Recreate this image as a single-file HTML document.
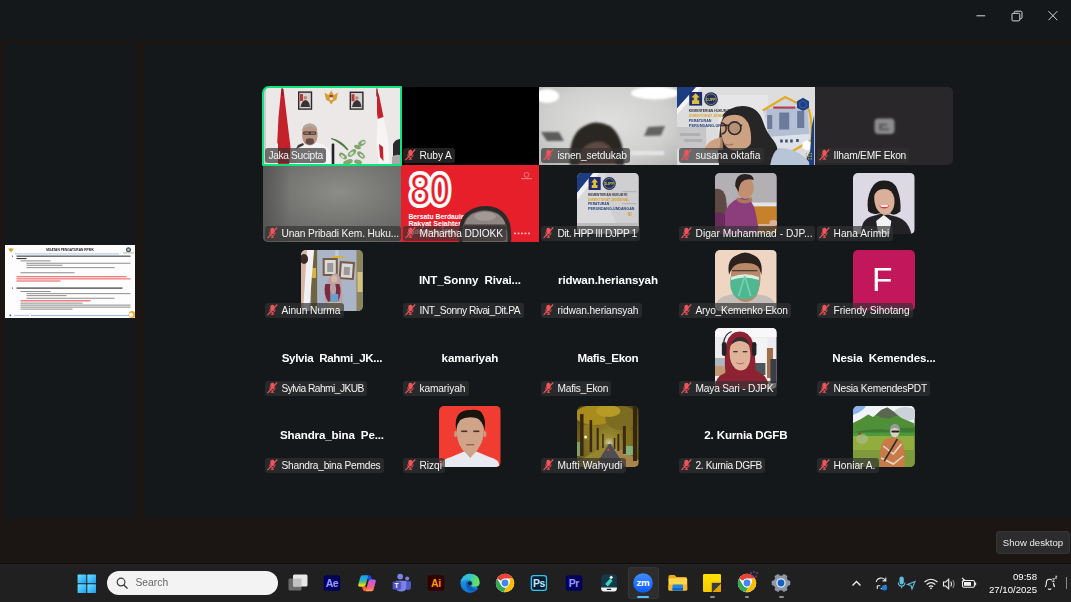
<!DOCTYPE html>
<html lang="id"><head><meta charset="utf-8"><title>Zoom Meeting</title>
<style>
html,body{margin:0;padding:0}
body{width:1071px;height:602px;overflow:hidden;background:#1b1614;position:relative;font-family:"Liberation Sans",sans-serif;color:#f2f2f2}
div,svg,span{position:absolute;box-sizing:border-box}
.lab,.big,.search,.tray,.tip,.av{will-change:transform}
.titlebar{left:0;top:0;width:1071px;height:40px;background:#14181b}
.side{left:5px;top:44px;width:130px;height:474px;background:#14181b}
.main{left:144px;top:44px;width:927px;height:474px;background:#14181b}
.tile{width:138px;overflow:hidden}
.tile svg{left:0;top:0}
.av{width:61.500px;height:61px;border-radius:5px;overflow:hidden}
.av svg{left:0;top:0;width:61.500px;height:61px}
.lab{height:15px;border-radius:3px;background:rgba(50,50,50,.68);white-space:pre;font-size:10.2px;line-height:15px;color:#f4f4f4;overflow:hidden}
.lab span{top:.4px;height:15px}
.mic{left:1.900px;top:1.300px}
.big{width:138px;text-align:center;font-weight:bold;font-size:11.6px;white-space:pre;color:#fff}
.big span{position:static;display:inline-block}
.taskbar{left:0;top:563px;width:1071px;height:39px;background:linear-gradient(#242424,#202020 4px);border-top:1px solid #0f0d0c}
.ti{position:absolute}
.search{left:107px;top:571px;width:171px;height:24px;border-radius:12px;background:#f3f3f3;color:#666;font-size:10.300px;line-height:24px}
.tray{font-size:9.600px;color:#fff;text-align:right;white-space:pre}
.tip{left:996px;top:531px;width:74px;height:23px;border-radius:3px;background:#2c2c2c;border:1px solid #353535;color:#ececec;font-size:9.600px;line-height:21px;text-align:center;white-space:pre}
</style></head><body>
<svg width="0" height="0" style="left:0;top:0"><defs>
<filter id="bl" x="-5%" y="-5%" width="110%" height="110%"><feGaussianBlur stdDeviation=".45"/></filter>
<filter id="bl2" x="-10%" y="-10%" width="120%" height="120%"><feGaussianBlur stdDeviation="1.300"/></filter>
<filter id="bl3" x="-50%" y="-50%" width="200%" height="200%"><feGaussianBlur stdDeviation="1.800"/></filter>
</defs></svg>
<div class="titlebar"></div>
<svg style="left:970px;top:6px" width="96" height="20" viewBox="0 0 96 20"><g fill="none" stroke="#d6d8da" stroke-width="1">
<path d="M6.500 9.800 h8.700"/>
<rect x="42" y="7.300" width="7.800" height="7.600" rx="1.100"/><path d="M44.200 7.300 v-.8 q0 -1.300 1.300 -1.300 h5.200 q1.300 0 1.300 1.300 v5 q0 1.300 -1.300 1.300 h-.9"/>
<path d="M78.500 5.200 l8.800 9 M87.300 5.200 l-8.800 9"/></g></svg>
<div class="side"></div>
<div class="main"></div>

<div style="left:5px;top:245px;width:130px;height:73px;background:#fdfdfd;overflow:hidden;font-family:'Liberation Sans',sans-serif">
<span style="left:0;top:2.800px;width:130px;text-align:center;font-size:3.250px;font-weight:bold;color:#1a1a1a;will-change:transform">MUATAN PENGATURAN RPMK</span>
<svg width="130" height="73" viewBox="0 0 130 73" style="left:0;top:0"><g filter="url(#bl)">
<path d="M3.500 3 l1.500 .8 l1 -1 l1 1 l1.500 -.8 l-.6 2.600 l-1 .5 l-.9 1.600 l-.9 -1.600 l-1 -.5z" fill="#d4a437"/>
<circle cx="123.500" cy="4.700" r="2.500" fill="#2a5a9a"/><circle cx="123.500" cy="4.700" r="1.300" fill="#e0c040"/><rect x="118" y="7.600" width="11" height=".7" fill="#999"/>
<rect x="10" y="8.700" width="104" height=".5" fill="#5b8fd0"/>
<g fill="#3a3a3a"><rect x="7" y="10.700" width="1" height="1"/><rect x="11.500" y="10.600" width="114" height="1.100"/><rect x="11.500" y="13" width="10" height="1.100"/>
<rect x="7" y="42.600" width="1" height="1"/><rect x="11.500" y="42.500" width="106" height="1.200"/></g>
<g fill="#737373"><rect x="15.500" y="15.500" width="30" height=".8"/><rect x="21.500" y="17.800" width="104" height=".8"/><rect x="21.500" y="19.800" width="36" height=".8"/><rect x="21.500" y="22.300" width="88" height=".8"/>
<rect x="15.500" y="27.400" width="54" height=".8"/>
<rect x="15.500" y="46" width="30" height=".8"/><rect x="21.500" y="48.300" width="104" height=".8"/><rect x="21.500" y="50.300" width="40" height=".8"/><rect x="21.500" y="52.800" width="88" height=".8"/>
<rect x="15.500" y="57.700" width="62" height=".8"/><rect x="15.500" y="59.700" width="110" height=".8"/><rect x="15.500" y="61.700" width="110" height=".8"/><rect x="15.500" y="63.700" width="52" height=".8"/></g>
<g fill="#ea2a2c"><rect x="11.500" y="31.400" width="110" height=".8"/><rect x="11.500" y="33.500" width="114" height=".8"/><rect x="11.500" y="35.600" width="44" height=".8"/><rect x="15.500" y="55.400" width="70" height=".9"/></g>
<rect x="4.500" y="69.600" width="1.600" height="1.600" fill="#2a5ab0"/><rect x="9" y="70" width="15" height=".5" fill="#5b8fd0"/><rect x="26" y="70" width="98" height=".6" fill="#5b8fd0"/>
<circle cx="127" cy="69.500" r="3.500" fill="#f0b040"/><circle cx="126" cy="69.700" r="2" fill="#fff"/>
</g></svg></div>

<div class="tile" style="left:263px;top:87px;height:78px;border-radius:6px 0 0 0;"><svg width="138" height="78" viewBox="0 0 138 78" preserveAspectRatio="none">
<rect width="138" height="78" fill="#ebe8e7"/>
<rect width="3" height="78" fill="#cfcccb"/>
<g filter="url(#bl)" transform="translate(-1,0)">
<polygon points="19.300,2 21.500,2 26,40 28.500,60 27,78 15.500,78 15,60 16.500,30" fill="#c3202b"/>
<polygon points="13.500,58 16,56 16,78 13,78" fill="#f2f0f0"/>
<rect x="19.600" y="1" width="1" height="8" fill="#7a1a20"/>
<rect x="36" y="4.400" width="14.200" height="18.400" fill="#2a2a2c"/><rect x="37.400" y="5.800" width="11.400" height="15.600" fill="#d6d2cf"/><path d="M38.500 20 q1 -6 5 -7 q4 1 4.500 7z" fill="#3a3236"/><rect x="38" y="7" width="3" height="7" fill="#b8383c"/><circle cx="43.300" cy="10.800" r="1.800" fill="#b48c74"/>
<rect x="87.600" y="4.600" width="14" height="18.200" fill="#2a2a2c"/><rect x="89" y="6" width="11.200" height="15.400" fill="#d6d2cf"/><path d="M90 20 q1 -6 5 -7 q4 1 4.500 7z" fill="#3a3236"/><rect x="89.500" y="7.200" width="3" height="7" fill="#b8383c"/><circle cx="94.800" cy="11" r="1.800" fill="#b48c74"/>
<path d="M62.500 5.500 l4 2.500 l2.700 -4.500 l2.700 4.500 l4 -2.500 l-1.500 7.500 l-3 1.200 l-2.200 3.200 l-2.200 -3.200 l-3 -1.200z" fill="#d2a238"/>
<rect x="67.600" y="8" width="3.200" height="5" fill="#b8302c"/><rect x="67.600" y="10.300" width="3.200" height="2.700" fill="#f0ece8"/>
<rect x="114.300" y="1.500" width="1.200" height="8" fill="#5a2a2e"/>
<polygon points="115,2.500 117,8 121.500,30 116,33.500 115,26" fill="#c3202b"/>
<polygon points="115.500,32 121.500,30 126,52 127.500,77 117,77 114.500,56" fill="#f6f4f4"/>
<polygon points="117,57 121,60 121.500,74 118,70" fill="#c3202b"/>
<path d="M131 69 v-12 q2 -4.500 7 -5 v17z" fill="#2c2c2e"/><path d="M130 78 v-8 q3 -3 8 -2 v10z" fill="#a8a8aa"/>
<path d="M34 62 l2 -4 l5 -2 l1 2z" fill="#38383a"/>
<path d="M34 78 q1 -18 11 -21 l4 -1.500 h5 q10 2 14 8 q2 6 2 14.500z" fill="#f4f4f6"/>
<rect x="69.700" y="56.400" width="2.600" height="21.600" rx="1" fill="#242426"/>
<path d="M40 47 q-.5 -10.500 7.800 -10.500 q7.800 0 7.800 10.500 q0 7 -3 9.500 q-2.500 2 -4.800 2 q-2.600 0 -5 -2 q-2.800 -3 -2.800 -9.500z" fill="#bb957e"/>
<path d="M40.200 43 q1 -6.500 7.600 -6.500 q6.600 0 7.600 6.500 q-3 -3.500 -7.600 -3.500 q-4.600 0 -7.600 3.500z" fill="#b3a8a2"/>
<rect x="41.200" y="44.500" width="13" height="3.200" rx="1.200" fill="#3a3434"/><rect x="42.300" y="45.300" width="4.600" height="1.700" fill="#8a7468"/><rect x="48.600" y="45.300" width="4.600" height="1.700" fill="#8a7468"/>
<path d="M44 52 q4 -1.500 7.500 0 l.5 4 q-4 3.500 -8.500 0z" fill="#5e4c46"/>
<path d="M69.500 51 q10 2 17 11.500 l-1.200 1 q-8 -8.500 -16.500 -11.500z" fill="#4f7a40"/>
<g fill="#6f9a5e" opacity=".85"><ellipse cx="100" cy="56" rx="4" ry="2.500" transform="rotate(-30 100 56)"/><ellipse cx="95.500" cy="60" rx="3.500" ry="2" transform="rotate(20 95.500 60)"/><ellipse cx="90" cy="66" rx="5" ry="2.600" transform="rotate(-40 90 66)"/><ellipse cx="81" cy="69" rx="4.500" ry="2.400" transform="rotate(35 81 69)"/><ellipse cx="99" cy="68" rx="4.500" ry="2.500" transform="rotate(40 99 68)"/><ellipse cx="86" cy="75" rx="5" ry="2.500" transform="rotate(-20 86 75)"/><ellipse cx="96" cy="75" rx="4" ry="2.200" transform="rotate(15 96 75)"/></g>
<g fill="#dfe9da" opacity=".9"><ellipse cx="101" cy="55.500" rx="2" ry="1.200" transform="rotate(-30 101 55.500)"/><ellipse cx="89.500" cy="66.500" rx="2.500" ry="1.200" transform="rotate(-40 89.500 66.500)"/><ellipse cx="80.500" cy="69.500" rx="2.200" ry="1.100" transform="rotate(35 80.500 69.500)"/><ellipse cx="99.500" cy="68.500" rx="2.200" ry="1.100" transform="rotate(40 99.500 68.500)"/></g>
</g></svg></div>
<div class="lab" style="left:265px;top:148px;width:61.2px"><span style="left:3.4px;letter-spacing:-0.329px">Jaka Sucipta</span></div>
<div class="tile" style="left:401px;top:87px;height:78px;background:#000;"></div>
<div class="lab" style="left:403px;top:148px;width:52.1px"><svg class="mic" width="11" height="12" viewBox="0 0 11 12"><rect x="3.300" y=".8" width="4.200" height="6.400" rx="2.100" fill="#f0545a"/><path d="M2.600 5.600 q0 2.900 2.800 2.900 q2.800 0 2.800 -2.900" fill="none" stroke="#f0545a" stroke-width=".9"/><path d="M5.400 8.500 v1.500 M3.700 10.300 h3.400" stroke="#f0545a" stroke-width="1.100"/><path d="M.5 11.200 L10.200 .5" stroke="#f0545a" stroke-width="1.150"/></svg><span style="left:16.5px;letter-spacing:-0.093px">Ruby A</span></div>
<div class="tile" style="left:539px;top:87px;height:78px;"><svg width="138" height="78" viewBox="0 0 138 78" preserveAspectRatio="none">
<defs><radialGradient id="g3" cx="50%" cy="45%" r="75%"><stop offset="0" stop-color="#e0e0de"/><stop offset=".6" stop-color="#d0d0ce"/><stop offset="1" stop-color="#b4b4b2"/></radialGradient></defs>
<rect width="138" height="78" fill="url(#g3)"/>
<g filter="url(#bl2)">
<ellipse cx="8" cy="9" rx="12" ry="7" fill="#fff"/>
<ellipse cx="116" cy="6" rx="24" ry="6.500" fill="#fff"/>
<polygon points="2,45 20,45 25,54 8,54" fill="#5c5c5c"/>
<polygon points="109,40 126,39 122,48.500 105,49" fill="#646464"/>
<rect x="92" y="64" width="33" height="4" fill="#e6e6ea"/>
<path d="M31 78 q-2 -27 11 -37 q14 -10 29 -2 q14 10 14 39z" fill="#2b2624"/>
<path d="M40 78 q-1 -20 17 -23 q17 -2 20 23z" fill="#5e4a42"/>
</g></svg></div>
<div class="lab" style="left:541px;top:148px;width:89.0px"><svg class="mic" width="11" height="12" viewBox="0 0 11 12"><rect x="3.300" y=".8" width="4.200" height="6.400" rx="2.100" fill="#f0545a"/><path d="M2.600 5.600 q0 2.900 2.800 2.900 q2.800 0 2.800 -2.900" fill="none" stroke="#f0545a" stroke-width=".9"/><path d="M5.400 8.500 v1.500 M3.700 10.300 h3.400" stroke="#f0545a" stroke-width="1.100"/><path d="M.5 11.200 L10.200 .5" stroke="#f0545a" stroke-width="1.150"/></svg><span style="left:16.5px;letter-spacing:-0.155px">isnen_setdukab</span></div>
<div class="tile" style="left:677px;top:87px;height:78px;"><svg width="138" height="78" viewBox="0 0 138 78" preserveAspectRatio="none">
<rect width="138" height="78" fill="#dddddd"/>
<g filter="url(#bl)" transform="translate(-.8,0)">
<rect x="42" y="8" width="50" height="40" fill="#e6e6e8"/>
<path d="M0 40 h30 v22 h-30z" fill="#c6c6c8"/><path d="M4 46 h20 v3 h-20z M8 52 h18 v3 h-18z" fill="#b0b0b2"/>
<polygon points="0,0 20,0 0,22.600" fill="#1c3c80"/>
<polygon points="20,0 25.500,0 0,28.500 0,22.600" fill="#f4f4f4"/>
<rect x="13" y="5" width="12.900" height="13.600" fill="#232a6e"/>
<path d="M19.400 6.300 l4.200 4.200 h-2.400 v2.800 h1.800 v3.600 h-7.200 v-3.600 h1.800 v-2.800 h-2.400z" fill="#d9c23a"/>
<circle cx="34.800" cy="12.200" r="6.900" fill="#1d2f66"/><circle cx="34.800" cy="12.200" r="5.300" fill="none" stroke="#c8b04a" stroke-width=".6"/><text x="34.800" y="13.500" font-family="Liberation Sans, sans-serif" font-weight="bold" font-size="3.600" fill="#d9c23a" text-anchor="middle">DJPP</text>
<g font-family="Liberation Sans, sans-serif" font-weight="bold">
<text x="12.600" y="25.200" font-size="3.300" fill="#33333c" textLength="42" lengthAdjust="spacingAndGlyphs">KEMENTERIAN HUKUM RI</text>
<text x="12.600" y="30.300" font-size="3.900" fill="#d9a62a" textLength="44" lengthAdjust="spacingAndGlyphs">DIREKTORAT JENDERAL</text>
<text x="12.600" y="34.800" font-size="3.900" fill="#27407e" textLength="22.600" lengthAdjust="spacingAndGlyphs">PERATURAN</text>
<text x="12.600" y="39.800" font-size="3.900" fill="#27407e" textLength="49.500" lengthAdjust="spacingAndGlyphs">PERUNDANG-UNDANGAN</text>
</g>
<polygon points="86.500,23.500 109,10 132.500,22 135.500,53 116,64 96,60" fill="#d0d6e2"/>
<polygon points="90,22 131,19 133,47 92,50" fill="#b4bfd4"/>
<polygon points="92,50 133,47 134,56 118,63 96,60" fill="#dde2ea"/>
<rect x="97" y="19.500" width="22" height="2.200" fill="#b84048"/>
<g fill="#6c7a9c"><rect x="91" y="28" width="5" height="14"/><rect x="103" y="25.500" width="10" height="17"/><rect x="121" y="24" width="7" height="17"/></g>
<g fill="#3e4a68"><rect x="104" y="52.500" width="2.500" height="3"/><rect x="109" y="52.500" width="2.500" height="3"/><rect x="114" y="52.500" width="2.500" height="3"/><rect x="120" y="52" width="2.500" height="3"/></g>
<path d="M86.500 23.500 L109 10 L132.500 22" fill="none" stroke="#e3ac22" stroke-width="2.200"/>
<path d="M132.500 22 q3.500 10 3 31 l-19 11" fill="none" stroke="#e3ac22" stroke-width="2.200"/>
<polygon points="120.800,14.300 126.800,10.800 132.800,14.300 132.800,20.800 126.800,24 120.800,20.800" fill="#1f3f86"/>
<polygon points="123.500,15.800 126.800,13.900 130.100,15.800 130.100,19.400 126.800,21.200 123.500,19.400" fill="none" stroke="#4a6ab0" stroke-width=".7"/>
<polygon points="126.200,55.800 130.800,53.200 135.400,55.800 135.400,61 130.800,63.600 126.200,61" fill="#fff"/>
<polygon points="138,28 138,78 127,78 134,64 135.500,40" fill="#1c3c80"/>
<g fill="#c8a838"><rect x="129.500" y="66" width="1.300" height="1.300"/><rect x="132" y="66" width="1.300" height="1.300"/><rect x="134.500" y="66" width="1.300" height="1.300"/><rect x="129.500" y="68.600" width="1.300" height="1.300"/><rect x="132" y="68.600" width="1.300" height="1.300"/><rect x="134.500" y="68.600" width="1.300" height="1.300"/><rect x="129.500" y="71.200" width="1.300" height="1.300"/><rect x="132" y="71.200" width="1.300" height="1.300"/><rect x="134.500" y="71.200" width="1.300" height="1.300"/></g>
<path d="M43 78 q-3 -10 0 -22 q0 -18 4 -26 q6 -11 19 -11 q16 0 21 16 q3 10 10 18 q6 8 4 16 q-2 6 -5 9z" fill="#252527"/>
<path d="M45 46 q-2 -15 8 -17.500 q13 -3 19 7.500 q4 10 2.500 21 q-4 6 -14.500 6.500 q-13 0 -15 -17.500z" fill="#cda283"/>
<path d="M46 30 q10 -7 24 -1 q-4 -8 -13 -7 q-8 0 -11 8z" fill="#252527"/>
<path d="M28 63 q3 -10 16 -12.500 q3 5 2.500 12.500z" fill="#cda283"/>
<path d="M44 50 q1 6 -1 12 h3 q1 -6 0 -12z" fill="#a87e66"/>
<rect x="44" y="37.500" width="22" height="1.800" fill="#3a3030"/>
<circle cx="58.400" cy="41.200" r="6.300" fill="#b89078" stroke="#332a2a" stroke-width="1.600"/>
<path d="M44.500 36 q5 0 5.500 5 q0 5 -4.500 6" fill="none" stroke="#332a2a" stroke-width="1.500"/>
<path d="M48 57 q5 2 9 0" stroke="#a86a5c" stroke-width="1.200" fill="none"/>
<path d="M94 78 q2 -13 9 -17 q18 0 30 14 v3z" fill="#b8c4d8"/>
</g></svg></div>
<div class="lab" style="left:679px;top:148px;width:84.6px"><svg class="mic" width="11" height="12" viewBox="0 0 11 12"><rect x="3.300" y=".8" width="4.200" height="6.400" rx="2.100" fill="#f0545a"/><path d="M2.600 5.600 q0 2.900 2.800 2.900 q2.800 0 2.800 -2.900" fill="none" stroke="#f0545a" stroke-width=".9"/><path d="M5.400 8.500 v1.500 M3.700 10.300 h3.400" stroke="#f0545a" stroke-width="1.100"/><path d="M.5 11.200 L10.200 .5" stroke="#f0545a" stroke-width="1.150"/></svg><span style="left:16.5px;letter-spacing:-0.065px">susana oktafia</span></div>
<div class="tile" style="left:815px;top:87px;height:78px;background:#29272a;border-radius:0 5px 5px 0;"><svg width="138" height="78"><g filter="url(#bl2)"><rect x="59.500" y="31.500" width="20" height="15.500" rx="4" fill="#8c8c8e"/><path d="M64 36.500 h8 v2.500 h-5 v2 h7 v2.500 h-10z" fill="#5c5c5e"/></g></svg></div>
<div class="lab" style="left:817px;top:148px;width:92.4px"><svg class="mic" width="11" height="12" viewBox="0 0 11 12"><rect x="3.300" y=".8" width="4.200" height="6.400" rx="2.100" fill="#f0545a"/><path d="M2.600 5.600 q0 2.900 2.800 2.900 q2.800 0 2.800 -2.900" fill="none" stroke="#f0545a" stroke-width=".9"/><path d="M5.400 8.500 v1.500 M3.700 10.300 h3.400" stroke="#f0545a" stroke-width="1.100"/><path d="M.5 11.200 L10.200 .5" stroke="#f0545a" stroke-width="1.150"/></svg><span style="left:16.5px;letter-spacing:-0.194px">Ilham/EMF Ekon</span></div>
<div class="tile" style="left:263px;top:165px;height:77px;border-radius:0 0 0 5px;"><svg width="138" height="77" viewBox="0 0 138 78" preserveAspectRatio="none">
<defs><radialGradient id="g6" cx="55%" cy="35%" r="75%"><stop offset="0" stop-color="#8c8c88"/><stop offset=".6" stop-color="#727270"/><stop offset="1" stop-color="#626260"/></radialGradient>
<linearGradient id="g6b" x1="0" x2="1"><stop offset="0" stop-color="#4e4e4c" stop-opacity=".7"/><stop offset=".2" stop-color="#4e4e4c" stop-opacity="0"/></linearGradient></defs>
<rect width="138" height="78" fill="url(#g6)"/><rect width="138" height="78" fill="url(#g6b)"/></svg></div>
<div class="lab" style="left:265px;top:225.5px;width:135.5px"><svg class="mic" width="11" height="12" viewBox="0 0 11 12"><rect x="3.300" y=".8" width="4.200" height="6.400" rx="2.100" fill="#f0545a"/><path d="M2.600 5.600 q0 2.900 2.800 2.900 q2.800 0 2.800 -2.900" fill="none" stroke="#f0545a" stroke-width=".9"/><path d="M5.400 8.500 v1.500 M3.700 10.300 h3.400" stroke="#f0545a" stroke-width="1.100"/><path d="M.5 11.200 L10.200 .5" stroke="#f0545a" stroke-width="1.150"/></svg><span style="left:16.5px;letter-spacing:-0.128px">Unan Pribadi Kem. Huku...</span></div>
<div class="tile" style="left:401px;top:165px;height:77px;"><svg width="138" height="77" viewBox="0 0 138 78" preserveAspectRatio="none">
<rect width="138" height="78" fill="#e71f2b"/>
<g font-family="Liberation Sans, sans-serif" font-weight="bold" fill="#fff">
<text font-family="DejaVu Sans, sans-serif" font-weight="normal" font-size="39" fill="none" stroke="#fff" stroke-width="7.200" stroke-linejoin="round" transform="translate(8.300,40) scale(.87,1)"><tspan x="0">8</tspan><tspan x="22.600">0</tspan></text>
<text font-family="DejaVu Sans, sans-serif" font-weight="normal" font-size="39" fill="#e71f2b" stroke="#fff" stroke-width=".4" transform="translate(8.300,40) scale(.87,1)"><tspan x="0">8</tspan><tspan x="22.600">0</tspan></text>
<text x="7.400" y="54.300" font-size="7.500" textLength="58.500" lengthAdjust="spacingAndGlyphs">Bersatu Berdaulat</text>
<text x="7.400" y="61.300" font-size="7.500" textLength="56.500" lengthAdjust="spacingAndGlyphs">Rakyat Sejahtera</text>
<text x="7.400" y="70.300" font-size="7.500" textLength="49" lengthAdjust="spacingAndGlyphs">Indonesia Maju</text>
</g>
<g filter="url(#bl)">
<circle cx="125.500" cy="10" r="2.400" fill="none" stroke="#f6a0a6" stroke-width=".6"/><rect x="120" y="13.500" width="11" height=".8" fill="#f6a0a6"/>
<g fill="#f4b6ba"><rect x="113" y="68.500" width="2" height="1.600"/><rect x="116.500" y="68.500" width="2" height="1.600"/><rect x="120" y="68.500" width="2" height="1.600"/><rect x="123.500" y="68.500" width="2" height="1.600"/><rect x="127" y="68.500" width="2" height="1.600"/></g>
<path d="M58 78 q-2 -24 9 -31 q9 -6 19 -5.500 q18 1 23 18 q2 10 1 18.500z" fill="#2e2a2a"/>
<path d="M61.500 78 q-2 -21 8 -28 q14 -8 27 -1 q11 7 10 29z" fill="#6a605e"/>
<path d="M64 60 q2 -12 20 -13.500 q17 1 20.500 13.500z" fill="#8f8683"/>
<ellipse cx="84" cy="52" rx="11" ry="4.500" fill="#a39a97"/>
<rect x="63" y="60.500" width="43" height="5" fill="#463f3e"/>
</g></svg></div>
<div class="lab" style="left:403px;top:225.5px;width:103.2px"><svg class="mic" width="11" height="12" viewBox="0 0 11 12"><rect x="3.300" y=".8" width="4.200" height="6.400" rx="2.100" fill="#f0545a"/><path d="M2.600 5.600 q0 2.900 2.800 2.900 q2.800 0 2.800 -2.900" fill="none" stroke="#f0545a" stroke-width=".9"/><path d="M5.400 8.500 v1.500 M3.700 10.300 h3.400" stroke="#f0545a" stroke-width="1.100"/><path d="M.5 11.200 L10.200 .5" stroke="#f0545a" stroke-width="1.150"/></svg><span style="left:16.5px;letter-spacing:-0.102px">Mahartha DDIOKK</span></div>
<div class="av" style="left:577px;top:173px"><svg viewBox="0 0 61 61" preserveAspectRatio="none">
<rect width="61" height="61" fill="#d9d9db"/>
<g filter="url(#bl)">
<polygon points="28,0 61,0 61,61 44,61 30,30" fill="#cfcfd2"/>
<polygon points="0,0 16,0 0,20" fill="#1c3c80"/>
<polygon points="16,0 22,0 0,27 0,20" fill="#f0f0f2"/>
<rect x="11.500" y="4" width="12" height="13" fill="#232a6e"/>
<path d="M17.500 5.500 l3.400 4 h-2 v2.500 h1.500 v3 h-5.800 v-3 h1.500 v-2.500 h-2z" fill="#d9c23a"/>
<circle cx="32" cy="10.500" r="6.500" fill="#1d2f66"/><circle cx="32" cy="10.500" r="5" fill="none" stroke="#c8b04a" stroke-width=".6"/><text x="32" y="11.700" font-family="Liberation Sans, sans-serif" font-weight="bold" font-size="3.400" fill="#d9c23a" text-anchor="middle">DJPP</text>
<rect x="0" y="50" width="61" height="11" fill="#bdbdc0"/>
<rect x="45" y="18" width="14" height="1.200" fill="#b4b4b8"/><rect x="45" y="30" width="14" height="1.200" fill="#b4b4b8"/>
</g>
<g font-family="Liberation Sans, sans-serif" font-weight="bold">
<text x="11" y="23.300" font-size="2.900" fill="#33333c" textLength="39" lengthAdjust="spacingAndGlyphs">KEMENTERIAN HUKUM RI</text>
<text x="11" y="28" font-size="3.300" fill="#d6a32c" textLength="41" lengthAdjust="spacingAndGlyphs">DIREKTORAT JENDERAL</text>
<text x="11" y="32.500" font-size="3.300" fill="#27407e" textLength="21" lengthAdjust="spacingAndGlyphs">PERATURAN</text>
<text x="11" y="37" font-size="3.300" fill="#27407e" textLength="46" lengthAdjust="spacingAndGlyphs">PERUNDANG-UNDANGAN</text>
<text x="50" y="43.500" font-size="5" fill="#d6a32c">III</text>
</g></svg></div>
<div class="lab" style="left:541px;top:225.5px;width:99.0px"><svg class="mic" width="11" height="12" viewBox="0 0 11 12"><rect x="3.300" y=".8" width="4.200" height="6.400" rx="2.100" fill="#f0545a"/><path d="M2.600 5.600 q0 2.900 2.800 2.900 q2.800 0 2.800 -2.900" fill="none" stroke="#f0545a" stroke-width=".9"/><path d="M5.400 8.500 v1.500 M3.700 10.300 h3.400" stroke="#f0545a" stroke-width="1.100"/><path d="M.5 11.200 L10.200 .5" stroke="#f0545a" stroke-width="1.150"/></svg><span style="left:16.5px;letter-spacing:-0.431px">Dit. HPP III DJPP 1</span></div>
<div class="av" style="left:715px;top:173px"><svg viewBox="0 0 61 61" preserveAspectRatio="none">
<rect width="61" height="61" fill="#aba9ab"/>
<g filter="url(#bl)">
<rect x="0" y="0" width="61" height="30" fill="#b2b0b2"/>
<rect x="36" y="29.500" width="25" height="4" fill="#e4e4e6"/>
<rect x="38" y="33.500" width="23" height="27.500" fill="#c7812a"/>
<path d="M0 16 q9 -2 11 10 q2 14 0 35 h-11z" fill="#5e4844"/>
<path d="M9 61 q-2 -22 6 -30 q8 -8 18 -6 q6 6 8 18 q2 10 2 18z" fill="#8c3c7c"/>
<path d="M0 40 q6 -2 10 2 v19 h-10z" fill="#6a2a5c"/>
<ellipse cx="30" cy="15" rx="8.500" ry="11" fill="#c09070"/>
<path d="M20 13 q0 -12 10 -12 q8 0 8.500 6 q-8 -2 -12 2 q-3 4 -3 10z" fill="#2a2422"/>
<path d="M22 24 q8 6 14 0 l1 4 q-8 5 -15 0z" fill="#a87a5c"/>
<ellipse cx="58" cy="50" rx="4" ry="3" fill="#d8b49c"/>
<rect x="43" y="51" width="14" height="2.500" fill="#d8b49c"/>
</g></svg></div>
<div class="lab" style="left:679px;top:225.5px;width:135.5px"><svg class="mic" width="11" height="12" viewBox="0 0 11 12"><rect x="3.300" y=".8" width="4.200" height="6.400" rx="2.100" fill="#f0545a"/><path d="M2.600 5.600 q0 2.900 2.800 2.900 q2.800 0 2.800 -2.900" fill="none" stroke="#f0545a" stroke-width=".9"/><path d="M5.400 8.500 v1.500 M3.700 10.300 h3.400" stroke="#f0545a" stroke-width="1.100"/><path d="M.5 11.200 L10.200 .5" stroke="#f0545a" stroke-width="1.150"/></svg><span style="left:16.5px;letter-spacing:0.024px">Digar Muhammad - DJP...</span></div>
<div class="av" style="left:853px;top:173px"><svg viewBox="0 0 61 61" preserveAspectRatio="none">
<rect width="61" height="61" fill="#dcd9e5"/>
<g filter="url(#bl)">
<path d="M8 61 q0 -16 12 -18 l10 -3 l10 3 q14 2 18 18z" fill="#222328"/>
<path d="M23 48 l7.500 -6 l7.500 6 l-2 13 h-11z" fill="#f2f2f2"/>
<path d="M15 38 q-2 -12 3 -22 q4 -9 13 -8.500 q10 0 13 9 q4 10 3 22 q-6 5 -10 2 l-12 0 q-6 2 -10 -2.500z" fill="#1f1c1e"/>
<path d="M21 24 q1 -8 10 -8 q8 0 10 9 q1 10 -4 15 q-5 4 -10 0 q-6 -5 -6 -16z" fill="#dbb09a"/>
<path d="M26 32 q5 4 10 0 q-1 3.500 -5 3.500 q-4 0 -5 -3.500z" fill="#d03a4a"/>
<rect x="27.500" y="32.300" width="7" height="1.500" fill="#fff"/>
</g></svg></div>
<div class="lab" style="left:817px;top:225.5px;width:75.6px"><svg class="mic" width="11" height="12" viewBox="0 0 11 12"><rect x="3.300" y=".8" width="4.200" height="6.400" rx="2.100" fill="#f0545a"/><path d="M2.600 5.600 q0 2.900 2.800 2.900 q2.800 0 2.800 -2.900" fill="none" stroke="#f0545a" stroke-width=".9"/><path d="M5.400 8.500 v1.500 M3.700 10.300 h3.400" stroke="#f0545a" stroke-width="1.100"/><path d="M.5 11.200 L10.200 .5" stroke="#f0545a" stroke-width="1.150"/></svg><span style="left:16.5px;letter-spacing:0.027px">Hana Arimbi</span></div>
<div class="av" style="left:301px;top:250.3px"><svg viewBox="0 0 61 61" preserveAspectRatio="none">
<rect width="61" height="61" fill="#a7b2c4"/>
<g filter="url(#bl)">
<rect x="13" y="0" width="48" height="61" fill="#aab6c8"/>
<rect x="34" y="0" width="3" height="61" fill="#c2cad6"/>
<rect x="10" y="0" width="6" height="61" fill="#6f6440"/>
<rect x="11" y="18" width="4" height="10" fill="#d9b43a"/>
<rect x="55" y="0" width="6" height="61" fill="#8b845c"/>
<rect x="56" y="22" width="5" height="20" fill="#d6c27a"/>
<rect x="0" y="0" width="8" height="61" fill="#d8b8a4"/>
<polygon points="6,0 13,0 8,61 2,61" fill="#f2f2f4"/>
<ellipse cx="3" cy="9" rx="4" ry="5" fill="#3a2c28"/>
<path d="M32 6 h10 l2 2 h-14z" fill="#d9b43a"/>
<rect x="21.500" y="8" width="15" height="18" fill="#7a5a44"/><rect x="23.500" y="10" width="11" height="14" fill="#dcdad6"/><rect x="26" y="13" width="6" height="9" fill="#9a9a9a"/>
<rect x="38" y="11.500" width="15" height="18" fill="#7a5a44" transform="rotate(4 45 20)"/><rect x="40" y="13.500" width="11" height="14" fill="#dcdad6" transform="rotate(4 45 20)"/><rect x="42.500" y="17" width="6" height="8" fill="#9a9a9a" transform="rotate(4 45 20)"/>
<path d="M27 61 q-6 -14 -2 -26 q3 -10 9 -12 q6 2 6 12 q3 10 -1 26z" fill="#b9a1a6"/>
<path d="M24 34 q-2 10 3 18 l4 -2 q-3 -8 -2 -16z M38 34 q3 8 -1 17 l-4 -2 q3 -8 1 -15z" fill="#7c2a3c"/>
<ellipse cx="33" cy="29" rx="3" ry="3.500" fill="#dab8a4"/>
<path d="M29 44 h8 v9 h-8z" fill="#6aa0cc"/>
<rect x="26" y="52" width="14" height="9" fill="#c9b89a"/>
</g></svg></div>
<div class="lab" style="left:265px;top:303px;width:78.7px"><svg class="mic" width="11" height="12" viewBox="0 0 11 12"><rect x="3.300" y=".8" width="4.200" height="6.400" rx="2.100" fill="#f0545a"/><path d="M2.600 5.600 q0 2.900 2.800 2.900 q2.800 0 2.800 -2.900" fill="none" stroke="#f0545a" stroke-width=".9"/><path d="M5.400 8.500 v1.500 M3.700 10.300 h3.400" stroke="#f0545a" stroke-width="1.100"/><path d="M.5 11.200 L10.200 .5" stroke="#f0545a" stroke-width="1.150"/></svg><span style="left:16.5px;letter-spacing:-0.052px">Ainun Nurma</span></div>
<div class="big" style="left:401px;top:242px;height:77px;line-height:76px"><span style="letter-spacing:-0.120px;word-spacing:3.0px;margin-right:0.120px">INT_Sonny Rivai...</span></div>
<div class="lab" style="left:403px;top:303px;width:120.5px"><svg class="mic" width="11" height="12" viewBox="0 0 11 12"><rect x="3.300" y=".8" width="4.200" height="6.400" rx="2.100" fill="#f0545a"/><path d="M2.600 5.600 q0 2.900 2.800 2.900 q2.800 0 2.800 -2.900" fill="none" stroke="#f0545a" stroke-width=".9"/><path d="M5.400 8.500 v1.500 M3.700 10.300 h3.400" stroke="#f0545a" stroke-width="1.100"/><path d="M.5 11.200 L10.200 .5" stroke="#f0545a" stroke-width="1.150"/></svg><span style="left:16.5px;letter-spacing:-0.433px">INT_Sonny Rivai_Dit.PA</span></div>
<div class="big" style="left:539px;top:242px;height:77px;line-height:76px"><span style="letter-spacing:-0.112px;word-spacing:0px;margin-right:0.112px">ridwan.heriansyah</span></div>
<div class="lab" style="left:541px;top:303px;width:100.6px"><svg class="mic" width="11" height="12" viewBox="0 0 11 12"><rect x="3.300" y=".8" width="4.200" height="6.400" rx="2.100" fill="#f0545a"/><path d="M2.600 5.600 q0 2.900 2.800 2.900 q2.800 0 2.800 -2.900" fill="none" stroke="#f0545a" stroke-width=".9"/><path d="M5.400 8.500 v1.500 M3.700 10.300 h3.400" stroke="#f0545a" stroke-width="1.100"/><path d="M.5 11.200 L10.200 .5" stroke="#f0545a" stroke-width="1.150"/></svg><span style="left:16.5px;letter-spacing:-0.111px">ridwan.heriansyah</span></div>
<div class="av" style="left:715px;top:250.3px"><svg viewBox="0 0 61 61" preserveAspectRatio="none">
<rect width="61" height="61" fill="#efd6c3"/>
<g filter="url(#bl)">
<path d="M0 61 q0 -14 14 -16 l16 -4 l16 4 q15 2 15 16z" fill="#c4bdb8"/>
<path d="M14 25 q-3 -16 8 -20 q8 -5 16 0 q10 4 8 20 q-2 -10 -16 -10 q-14 0 -16 10z" fill="#2a211e"/>
<path d="M16 22 q1 -9 14.500 -9 q13.500 0 14.500 9 q1 14 -4 24 q-5 6 -10.500 6 q-6 0 -11 -6 q-5 -10 -3.500 -24z" fill="#b98868"/>
<rect x="17" y="20" width="25" height="1.300" fill="#4a3a34"/>
<path d="M15.500 27 q14 -5 28 0 q2 14 -5 20 q-9 5 -18 0 q-7 -6 -5 -20z" fill="#4fb892"/>
<path d="M16 27 q14 -5.500 27.500 0 l0 3 q-14 -5 -27.500 0z" fill="#d8efe6"/>
<path d="M29.500 26 l-6 20 M29.500 26 l6 20" stroke="#7fd0b2" stroke-width="1.500" fill="none"/>
</g></svg></div>
<div class="lab" style="left:679px;top:303px;width:111.9px"><svg class="mic" width="11" height="12" viewBox="0 0 11 12"><rect x="3.300" y=".8" width="4.200" height="6.400" rx="2.100" fill="#f0545a"/><path d="M2.600 5.600 q0 2.900 2.800 2.900 q2.800 0 2.800 -2.900" fill="none" stroke="#f0545a" stroke-width=".9"/><path d="M5.400 8.500 v1.500 M3.700 10.300 h3.400" stroke="#f0545a" stroke-width="1.100"/><path d="M.5 11.200 L10.200 .5" stroke="#f0545a" stroke-width="1.150"/></svg><span style="left:16.5px;letter-spacing:-0.212px">Aryo_Kemenko Ekon</span></div>
<div class="av" style="left:853px;top:250.3px;background:#c2185b"><span style="left:0;top:0;width:61.500px;height:61px;line-height:60.500px;text-align:center;font-size:33.500px;color:#fff;text-indent:-3px">F</span></div>
<div class="lab" style="left:817px;top:303px;width:95.8px"><svg class="mic" width="11" height="12" viewBox="0 0 11 12"><rect x="3.300" y=".8" width="4.200" height="6.400" rx="2.100" fill="#f0545a"/><path d="M2.600 5.600 q0 2.900 2.800 2.900 q2.800 0 2.800 -2.900" fill="none" stroke="#f0545a" stroke-width=".9"/><path d="M5.400 8.500 v1.500 M3.700 10.300 h3.400" stroke="#f0545a" stroke-width="1.100"/><path d="M.5 11.200 L10.200 .5" stroke="#f0545a" stroke-width="1.150"/></svg><span style="left:16.5px;letter-spacing:-0.064px">Friendy Sihotang</span></div>
<div class="big" style="left:263px;top:319px;height:78px;line-height:77px"><span style="letter-spacing:-0.317px;word-spacing:3.0px;margin-right:0.317px">Sylvia Rahmi_JK...</span></div>
<div class="lab" style="left:265px;top:380.5px;width:102.2px"><svg class="mic" width="11" height="12" viewBox="0 0 11 12"><rect x="3.300" y=".8" width="4.200" height="6.400" rx="2.100" fill="#f0545a"/><path d="M2.600 5.600 q0 2.900 2.800 2.900 q2.800 0 2.800 -2.900" fill="none" stroke="#f0545a" stroke-width=".9"/><path d="M5.400 8.500 v1.500 M3.700 10.300 h3.400" stroke="#f0545a" stroke-width="1.100"/><path d="M.5 11.200 L10.200 .5" stroke="#f0545a" stroke-width="1.150"/></svg><span style="left:16.5px;letter-spacing:-0.515px">Sylvia Rahmi_JKUB</span></div>
<div class="big" style="left:401px;top:319px;height:78px;line-height:77px"><span style="letter-spacing:-0.075px;word-spacing:0px;margin-right:0.075px">kamariyah</span></div>
<div class="lab" style="left:403px;top:380.5px;width:65.5px"><svg class="mic" width="11" height="12" viewBox="0 0 11 12"><rect x="3.300" y=".8" width="4.200" height="6.400" rx="2.100" fill="#f0545a"/><path d="M2.600 5.600 q0 2.900 2.800 2.900 q2.800 0 2.800 -2.900" fill="none" stroke="#f0545a" stroke-width=".9"/><path d="M5.400 8.500 v1.500 M3.700 10.300 h3.400" stroke="#f0545a" stroke-width="1.100"/><path d="M.5 11.200 L10.200 .5" stroke="#f0545a" stroke-width="1.150"/></svg><span style="left:16.5px;letter-spacing:-0.144px">kamariyah</span></div>
<div class="big" style="left:539px;top:319px;height:78px;line-height:77px"><span style="letter-spacing:-0.374px;word-spacing:0px;margin-right:0.374px">Mafis_Ekon</span></div>
<div class="lab" style="left:541px;top:380.5px;width:70.4px"><svg class="mic" width="11" height="12" viewBox="0 0 11 12"><rect x="3.300" y=".8" width="4.200" height="6.400" rx="2.100" fill="#f0545a"/><path d="M2.600 5.600 q0 2.900 2.800 2.900 q2.800 0 2.800 -2.900" fill="none" stroke="#f0545a" stroke-width=".9"/><path d="M5.400 8.500 v1.500 M3.700 10.300 h3.400" stroke="#f0545a" stroke-width="1.100"/><path d="M.5 11.200 L10.200 .5" stroke="#f0545a" stroke-width="1.150"/></svg><span style="left:16.5px;letter-spacing:-0.263px">Mafis_Ekon</span></div>
<div class="av" style="left:715px;top:328.3px"><svg viewBox="0 0 61 61" preserveAspectRatio="none">
<rect width="61" height="61" fill="#ececee"/>
<g filter="url(#bl)">
<rect x="0" y="0" width="61" height="9" fill="#f8f8fa"/>
<rect x="38" y="10" width="14" height="40" fill="#f3f3f3"/>
<rect x="51.500" y="20" width="6" height="30" fill="#a06e4c"/>
<rect x="55" y="31" width="6" height="24" fill="#3a3e48"/>
<rect x="0" y="30" width="12" height="8" fill="#b0b6c0"/>
<rect x="0" y="38" width="14" height="10" fill="#c09a72"/>
<rect x="36" y="35" width="14" height="12" fill="#50545c"/>
<path d="M0 61 q0 -12 8 -15 l10 -5 h20 l10 6 q5 4 5 14z" fill="#8d2030"/>
<path d="M10.500 46 q-2 -20 1 -31 q3 -11.500 13 -11.500 q10 0 13 11 q3 12 2.500 29 q-4 10 -15.500 11 q-10 -1 -14 -8.500z" fill="#8f2133"/>
<path d="M14.500 25 q0 -13.500 10 -14 q9.500 0 10.500 13.500 q1 10.500 -4 16 q-5.500 4 -11 0 q-5.500 -5.500 -5.500 -15.500z" fill="#dfb29a"/>
<path d="M16 17 q8 -8 18 0 q-1.500 -8 -9 -8 q-7.500 0 -9 8z" fill="#3a2a2e"/>
<rect x="6.800" y="14" width="4.600" height="14" rx="2.300" fill="#222228"/><rect x="36.500" y="14" width="4.600" height="14" rx="2.300" fill="#222228"/>
<path d="M8.500 15 q1 -9 8 -11.500" fill="none" stroke="#2a2a30" stroke-width="1.300"/>
<path d="M20.500 34 q4.500 2.500 9 0 q-1 2.200 -4.500 2.200 q-3.500 0 -4.500 -2.200z" fill="#c85a6a"/>
<rect x="18" y="23" width="4.500" height="1.300" fill="#4a3430"/><rect x="27.500" y="23" width="4.500" height="1.300" fill="#4a3430"/>
</g></svg></div>
<div class="lab" style="left:679px;top:380.5px;width:97.6px"><svg class="mic" width="11" height="12" viewBox="0 0 11 12"><rect x="3.300" y=".8" width="4.200" height="6.400" rx="2.100" fill="#f0545a"/><path d="M2.600 5.600 q0 2.900 2.800 2.900 q2.800 0 2.800 -2.900" fill="none" stroke="#f0545a" stroke-width=".9"/><path d="M5.400 8.500 v1.500 M3.700 10.300 h3.400" stroke="#f0545a" stroke-width="1.100"/><path d="M.5 11.200 L10.200 .5" stroke="#f0545a" stroke-width="1.150"/></svg><span style="left:16.5px;letter-spacing:-0.197px">Maya Sari - DJPK</span></div>
<div class="big" style="left:815px;top:319px;height:78px;line-height:77px"><span style="letter-spacing:-0.116px;word-spacing:3.0px;margin-right:0.116px">Nesia Kemendes...</span></div>
<div class="lab" style="left:817px;top:380.5px;width:113.2px"><svg class="mic" width="11" height="12" viewBox="0 0 11 12"><rect x="3.300" y=".8" width="4.200" height="6.400" rx="2.100" fill="#f0545a"/><path d="M2.600 5.600 q0 2.900 2.800 2.900 q2.800 0 2.800 -2.900" fill="none" stroke="#f0545a" stroke-width=".9"/><path d="M5.400 8.500 v1.500 M3.700 10.300 h3.400" stroke="#f0545a" stroke-width="1.100"/><path d="M.5 11.200 L10.200 .5" stroke="#f0545a" stroke-width="1.150"/></svg><span style="left:16.5px;letter-spacing:-0.269px">Nesia KemendesPDT</span></div>
<div class="big" style="left:263px;top:397px;height:77px;line-height:76px"><span style="letter-spacing:-0.152px;word-spacing:3.0px;margin-right:0.152px">Shandra_bina Pe...</span></div>
<div class="lab" style="left:265px;top:458px;width:118.7px"><svg class="mic" width="11" height="12" viewBox="0 0 11 12"><rect x="3.300" y=".8" width="4.200" height="6.400" rx="2.100" fill="#f0545a"/><path d="M2.600 5.600 q0 2.900 2.800 2.900 q2.800 0 2.800 -2.900" fill="none" stroke="#f0545a" stroke-width=".9"/><path d="M5.400 8.500 v1.500 M3.700 10.300 h3.400" stroke="#f0545a" stroke-width="1.100"/><path d="M.5 11.200 L10.200 .5" stroke="#f0545a" stroke-width="1.150"/></svg><span style="left:16.5px;letter-spacing:-0.250px">Shandra_bina Pemdes</span></div>
<div class="av" style="left:439px;top:405.6px"><svg viewBox="0 0 61 61" preserveAspectRatio="none">
<rect width="61" height="61" fill="#f13d31"/>
<g filter="url(#bl)">
<path d="M2 61 q0 -8 10 -10 l14 -6 h10 l14 6 q10 2 10 10z" fill="#e9e9f1"/>
<path d="M24 44 l7 8 l7 -8z" fill="#c9a088"/>
<path d="M17.500 22 q-1 -16 13.500 -17 q14 0 13.500 17 q0 12 -4 18 q-4 8 -9.500 8 q-6 0 -10 -8 q-3.500 -6 -3.500 -18z" fill="#cfa488"/>
<path d="M17 24 q-3 -20 14 -20 q10 -1 12 4 q4 6 2 16 q-2 -10 -8 -12 q-10 -2 -16 2 q-3 4 -4 10z" fill="#17120f"/>
<ellipse cx="16.500" cy="28" rx="1.500" ry="3" fill="#c99a80"/><ellipse cx="45.500" cy="28" rx="1.500" ry="3" fill="#c99a80"/>
<rect x="22" y="24.500" width="6" height="1.600" fill="#4a3228"/><rect x="34" y="24.500" width="6" height="1.600" fill="#4a3228"/>
<rect x="27" y="38" width="8" height="1.400" fill="#9a6458"/>
</g></svg></div>
<div class="lab" style="left:403px;top:458px;width:42.2px"><svg class="mic" width="11" height="12" viewBox="0 0 11 12"><rect x="3.300" y=".8" width="4.200" height="6.400" rx="2.100" fill="#f0545a"/><path d="M2.600 5.600 q0 2.900 2.800 2.900 q2.800 0 2.800 -2.900" fill="none" stroke="#f0545a" stroke-width=".9"/><path d="M5.400 8.500 v1.500 M3.700 10.300 h3.400" stroke="#f0545a" stroke-width="1.100"/><path d="M.5 11.200 L10.200 .5" stroke="#f0545a" stroke-width="1.150"/></svg><span style="left:16.5px;letter-spacing:-0.051px">Rizqi</span></div>
<div class="av" style="left:577px;top:405.6px"><svg viewBox="0 0 61 61" preserveAspectRatio="none">
<defs><radialGradient id="g23" cx="52%" cy="60%" r="75%"><stop offset="0" stop-color="#d0ccb0"/><stop offset=".12" stop-color="#9a8a30"/><stop offset=".5" stop-color="#7e6c20"/><stop offset="1" stop-color="#4e4016"/></radialGradient></defs>
<rect width="61" height="61" fill="url(#g23)"/>
<g filter="url(#bl)">
<ellipse cx="18" cy="9" rx="20" ry="10" fill="#a88c1f"/>
<ellipse cx="44" cy="12" rx="16" ry="12" fill="#7c6c22"/>
<ellipse cx="31" cy="5" rx="12" ry="6" fill="#b89a28"/>
<ellipse cx="12" cy="26" rx="9" ry="8" fill="#8e7a20"/>
<ellipse cx="50" cy="30" rx="6" ry="8" fill="#80701e"/>
<polygon points="31.500,38 33.500,38 48,61 17,61" fill="#4e4e52"/>
<polygon points="17,61 31.500,38 30,38 0,56 0,61" fill="#94842e"/>
<polygon points="48,61 33.500,38 35,38 61,54 61,61" fill="#a8844c"/>
<rect x="46" y="40" width="10" height="9" fill="#82b07a"/>
<rect x="0" y="36" width="5" height="14" fill="#809e66"/>
<rect x="3" y="8" width="3.500" height="42" fill="#3c2a12"/>
<rect x="12.500" y="14" width="2.500" height="32" fill="#3c2a12"/>
<rect x="19.500" y="22" width="2" height="22" fill="#3c2a12"/>
<rect x="25" y="28" width="1.500" height="14" fill="#3c2a12"/>
<rect x="55.500" y="0" width="4" height="55" fill="#36260f"/>
<rect x="45.500" y="20" width="3" height="28" fill="#3c2a12"/>
<rect x="40" y="28" width="2" height="17" fill="#3c2a12"/>
<rect x="36.500" y="32" width="1.500" height="11" fill="#3c2a12"/>
<circle cx="31" cy="44" r="1.200" fill="#c84a3a"/>
<circle cx="8.500" cy="31" r="1.500" fill="#f0f0e0"/>
</g></svg></div>
<div class="lab" style="left:541px;top:458px;width:84.5px"><svg class="mic" width="11" height="12" viewBox="0 0 11 12"><rect x="3.300" y=".8" width="4.200" height="6.400" rx="2.100" fill="#f0545a"/><path d="M2.600 5.600 q0 2.900 2.800 2.900 q2.800 0 2.800 -2.900" fill="none" stroke="#f0545a" stroke-width=".9"/><path d="M5.400 8.500 v1.500 M3.700 10.300 h3.400" stroke="#f0545a" stroke-width="1.100"/><path d="M.5 11.200 L10.200 .5" stroke="#f0545a" stroke-width="1.150"/></svg><span style="left:16.5px;letter-spacing:0.041px">Mufti Wahyudi</span></div>
<div class="big" style="left:677px;top:397px;height:77px;line-height:76px"><span style="letter-spacing:-0.185px;word-spacing:0px;margin-right:0.185px">2. Kurnia DGFB</span></div>
<div class="lab" style="left:679px;top:458px;width:86.3px"><svg class="mic" width="11" height="12" viewBox="0 0 11 12"><rect x="3.300" y=".8" width="4.200" height="6.400" rx="2.100" fill="#f0545a"/><path d="M2.600 5.600 q0 2.900 2.800 2.900 q2.800 0 2.800 -2.900" fill="none" stroke="#f0545a" stroke-width=".9"/><path d="M5.400 8.500 v1.500 M3.700 10.300 h3.400" stroke="#f0545a" stroke-width="1.100"/><path d="M.5 11.200 L10.200 .5" stroke="#f0545a" stroke-width="1.150"/></svg><span style="left:16.5px;letter-spacing:-0.386px">2. Kurnia DGFB</span></div>
<div class="av" style="left:853px;top:405.6px"><svg viewBox="0 0 61 61" preserveAspectRatio="none">
<rect width="61" height="61" fill="#8fa83c"/>
<g filter="url(#bl)">
<rect width="61" height="20" fill="#f1f3f6"/>
<path d="M0 0 h13 q-4 6 -13 9z" fill="#8db4e8"/>
<ellipse cx="52" cy="8" rx="12" ry="7" fill="#cdd1d8"/>
<path d="M0 28 v-11 l8 -4 l7 -4.500 l5 2.500 l8 -7 l6 -2.500 l6 4 l8 6.500 l13 5.500 v11.500z" fill="#4f8f38"/>
<path d="M23 9 l5 -5 l6 -2.500 l6 4 l4 4 l-8 3 l-8 -1z" fill="#5a6650"/>
<path d="M0 26 q20 -4 36 -2 q14 -3 25 -2 v8 h-61z" fill="#3d7a30"/>
<rect x="0" y="26.500" width="61" height="4" fill="#4d9a3c"/>
<rect x="0" y="30" width="61" height="31" fill="#92ac3c"/>
<rect x="0" y="44" width="61" height="17" fill="#7e9a3a"/>
<ellipse cx="9" cy="33" rx="6" ry="5" fill="#a8bc8a" opacity=".7"/>
<rect x="5" y="26.500" width="3" height="2" fill="#8a4a2a"/>
<path d="M27 61 q-2 -20 4 -27 l8 -3 l8 3 q6 8 4 27z" fill="#c87a4a"/>
<path d="M30 40 l10 8 l8 -10 M28 52 l12 6 l10 -8" stroke="#e8d8c8" stroke-width="1.600" fill="none"/>
<path d="M44 33 l-13 22" stroke="#2a2a2a" stroke-width="1.500"/>
<ellipse cx="41.500" cy="25" rx="4.700" ry="6.200" fill="#d8d2cc"/>
<path d="M36.500 25 q0 -7 5 -7 q5 0 5 7 q-2 -3 -5 -3 q-3 0 -5 3z" fill="#9a9a9a"/>
<rect x="38" y="24.500" width="8" height="2" rx="1" fill="#222"/>
</g></svg></div>
<div class="lab" style="left:817px;top:458px;width:61.7px"><svg class="mic" width="11" height="12" viewBox="0 0 11 12"><rect x="3.300" y=".8" width="4.200" height="6.400" rx="2.100" fill="#f0545a"/><path d="M2.600 5.600 q0 2.900 2.800 2.900 q2.800 0 2.800 -2.900" fill="none" stroke="#f0545a" stroke-width=".9"/><path d="M5.400 8.500 v1.500 M3.700 10.300 h3.400" stroke="#f0545a" stroke-width="1.100"/><path d="M.5 11.200 L10.200 .5" stroke="#f0545a" stroke-width="1.150"/></svg><span style="left:16.5px;letter-spacing:-0.001px">Honiar A.</span></div>
<div style="left:262px;top:86px;width:140px;height:80px;border:2px solid #0ce57b;border-radius:7px 1px 1px 1px"></div>
<div class="taskbar"></div>
<div class="tip">Show desktop</div>
<svg class="ti" style="left:77.4px;top:573.700px" width="20" height="20" viewBox="0 0 20 20"><defs><linearGradient id="wg" x1="0" y1="0" x2="1" y2="1"><stop offset="0" stop-color="#6fe0ff"/><stop offset="1" stop-color="#1a9df2"/></linearGradient></defs>
<g fill="url(#wg)"><rect x=".6" y=".6" width="8.700" height="8.700" rx=".6"/><rect x="10.300" y=".6" width="8.700" height="8.700" rx=".6"/><rect x=".6" y="10.300" width="8.700" height="8.700" rx=".6"/><rect x="10.300" y="10.300" width="8.700" height="8.700" rx=".6"/></g></svg>
<div class="search"><svg width="12.600" height="12.600" viewBox="0 0 14 14" style="left:9px;top:5.700px"><circle cx="5.600" cy="5.600" r="4.300" fill="none" stroke="#3a3a3a" stroke-width="1.300"/><path d="M8.800 8.800 l3.600 3.600" stroke="#3a3a3a" stroke-width="1.500" stroke-linecap="round"/></svg><span style="left:28.500px;top:0">Search</span></div>
<svg class="ti" style="left:288.0px;top:573.0px" width="20" height="20" viewBox="0 0 20 20"><rect x=".5" y="5.500" width="13" height="12" rx="1.500" fill="#6b6b6b"/><rect x="5" y="1.500" width="14.500" height="12" rx="1.500" fill="#e8e8e8"/><rect x="5" y="5.500" width="8.500" height="8" fill="#c2c2c2"/></svg>
<svg class="ti" style="left:322.0px;top:573.0px" width="20" height="20" viewBox="0 0 20 20"><rect x="1.700" y="2.200" width="16.600" height="15.600" rx="2.600" fill="#00005b"/><text x="9.900" y="13.800" font-family="Liberation Sans, sans-serif" font-weight="bold" font-size="10.400" text-anchor="middle" fill="#9999ff" letter-spacing="-.4">Ae</text></svg>
<svg class="ti" style="left:357.0px;top:573.0px" width="20" height="20" viewBox="0 0 20 20"><defs><linearGradient id="cp1" x1="0" y1="0" x2="0" y2="1"><stop offset="0" stop-color="#1e96f2"/><stop offset=".3" stop-color="#22a8e0"/><stop offset=".6" stop-color="#4cc470"/><stop offset=".85" stop-color="#e8d822"/><stop offset="1" stop-color="#f6cc1e"/></linearGradient>
<linearGradient id="cp2" x1="0" y1="0" x2="0" y2="1"><stop offset="0" stop-color="#a862f4"/><stop offset=".4" stop-color="#e856a8"/><stop offset=".75" stop-color="#f8667a"/><stop offset="1" stop-color="#ffa83e"/></linearGradient></defs>
<path d="M8.500 2.200 H12 Q13.600 2.200 14.200 4 L15.100 7.200 H12.500 Q11.300 7.200 10.800 6 Z" fill="#1c4fd6"/>
<path d="M11.500 18.200 H8 Q6.400 18.200 5.800 16.400 L4.900 13.200 H7.500 Q8.700 13.200 9.200 14.400Z" fill="#f4622e"/>
<path d="M5.200 2.200 H10 Q11.500 2.200 11 4 L8.600 12 Q8 13.800 6.200 13.800 H3 Q.8 13.800 1.300 11.600 L3.400 4 Q3.900 2.200 5.200 2.200Z" fill="url(#cp1)"/>
<path d="M14.800 18.200 H10 Q8.500 18.200 9 16.400 L11.400 8.400 Q12 6.600 13.800 6.600 H17 Q19.200 6.600 18.700 8.800 L16.600 16.400 Q16.100 18.200 14.800 18.200Z" fill="url(#cp2)"/></svg>
<svg class="ti" style="left:391.5px;top:573.0px" width="20" height="20" viewBox="0 0 20 20"><circle cx="15.200" cy="5.400" r="2" fill="#7b83eb"/><circle cx="8.200" cy="3.600" r="2.900" fill="#7b83eb"/>
<path d="M11.500 8.300 h6.700 q.8 0 .8 .8 v4.600 q0 3.300 -3.200 3.300 q-3 0 -4.300 -2.400z" fill="#5059c9"/>
<path d="M4 7.800 h9.400 q.8 0 .8 .8 v5.600 q0 4.300 -5 4.300 q-5.200 0 -5.200 -4.300z" fill="#7b83eb"/>
<path d="M4 9 h5.500 v6.500 q-1 1.500 -5.500 1z" fill="#4b53bc" opacity=".5"/>
<rect x=".6" y="8.600" width="8" height="8" rx="1" fill="#4b53bc"/>
<text x="4.600" y="15" font-family="Liberation Sans, sans-serif" font-weight="bold" font-size="6.800" text-anchor="middle" fill="#fff">T</text></svg>
<svg class="ti" style="left:426.0px;top:573.0px" width="20" height="20" viewBox="0 0 20 20"><rect x="1.700" y="2.200" width="16.600" height="15.600" rx="2.600" fill="#330000"/><text x="9.900" y="13.800" font-family="Liberation Sans, sans-serif" font-weight="bold" font-size="10.400" text-anchor="middle" fill="#ff9a00" letter-spacing="-.4">Ai</text></svg>
<svg class="ti" style="left:460.2px;top:573.0px" width="20" height="20" viewBox="0 0 20 20"><defs><linearGradient id="eg1" x1="0" y1="0" x2="0" y2="1"><stop offset="0" stop-color="#2cb4ee"/><stop offset=".5" stop-color="#1a8ae0"/><stop offset="1" stop-color="#1270cc"/></linearGradient>
<linearGradient id="eg2" x1="0" y1="0" x2="1" y2=".35"><stop offset="0" stop-color="#2cb4ee"/><stop offset=".5" stop-color="#36c4c8"/><stop offset="1" stop-color="#66e458"/></linearGradient></defs>
<circle cx="10" cy="10.300" r="9.600" fill="url(#eg1)"/>
<path d="M6.300 9 Q5.300 14 9 17.200 Q13 19.800 18.200 15.700 Q14 16.600 11.500 14.600 Q9.200 12.600 9.600 10 Q8 7.800 6.300 9Z" fill="#0f5ab2"/>
<path d="M1.800 6.500 Q4.500 .7 10 .7 Q19.600 1 19.600 9.800 Q19.500 12.600 16.500 13.400 Q13.600 13.900 11.600 13 Q13 11.600 12.300 9.500 Q11 6.400 7.500 6.200 Q4 6.200 1.200 9Z" fill="url(#eg2)"/>
<ellipse cx="9.900" cy="10.300" rx="1.900" ry="2" fill="#1c1c1e"/>
<path d="M20 11.500 Q19.300 13.400 16.600 13.800 L18.300 15.800 Q20 14.500 20.200 12Z" fill="#202020"/></svg>
<svg class="ti" style="left:495.0px;top:573.0px" width="20" height="20" viewBox="0 0 20 20"><circle cx="10" cy="10" r="9.200" fill="#fff"/>
<path d="M10 .8 a9.200 9.200 0 0 1 7.970 4.600 h-7.970 a4.600 4.600 0 0 0 -3.980 2.300 l-3.990 -2.300 a9.200 9.200 0 0 1 7.970 -4.600z" fill="#ea4335"/>
<path d="M2.030 5.400 l3.990 6.900 a4.600 4.600 0 0 0 5.300 2.100 l-2.500 4.700 a9.200 9.200 0 0 1 -6.790 -13.700z" fill="#34a853"/>
<path d="M17.970 5.400 a9.200 9.200 0 0 1 -9.150 13.700 l3.990 -6.800 a4.600 4.600 0 0 0 1.170 -6.900z" fill="#fbbc04"/>
<circle cx="10" cy="10" r="4.200" fill="#fff"/><circle cx="10" cy="10" r="3.400" fill="#4285f4"/></svg>
<svg class="ti" style="left:528.8px;top:573.0px" width="20" height="20" viewBox="0 0 20 20"><rect x="1.700" y="1.900" width="16.400" height="16.200" rx="3" fill="#31c5f0"/><rect x="3" y="3.200" width="13.800" height="13.600" rx="1.800" fill="#001e36"/><text x="9.900" y="13.800" font-family="Liberation Sans, sans-serif" font-weight="bold" font-size="10.400" text-anchor="middle" fill="#c4e6fa" letter-spacing="-.4">Ps</text></svg>
<svg class="ti" style="left:564.0px;top:573.0px" width="20" height="20" viewBox="0 0 20 20"><rect x="1.700" y="2.200" width="16.600" height="15.600" rx="2.600" fill="#00005b"/><text x="9.900" y="13.800" font-family="Liberation Sans, sans-serif" font-weight="bold" font-size="10.400" text-anchor="middle" fill="#9999ff" letter-spacing="-.4">Pr</text></svg>
<svg class="ti" style="left:598.5px;top:573.0px" width="20" height="20" viewBox="0 0 20 20"><rect x="2.200" y="1.200" width="15.600" height="14.500" rx="3" fill="#12384a"/>
<path d="M6.200 11 l4.800 -5.600 l2.600 2.400 l-4.800 5.600z" fill="#3ad6b0"/>
<path d="M10.300 4.400 l1.900 -1.900 l1.900 1.900 l-1.900 1.900z" fill="#f4f8f8"/>
<path d="M2 14.500 h16 q0 4 -3 4 h-10 q-3 0 -3 -4z" fill="#f2f2f2"/><rect x="7.800" y="15.700" width="4.400" height="1.300" rx=".6" fill="#222"/></svg>
<div style="left:627.500px;top:567px;width:31px;height:32px;border-radius:3px;background:#2d2d2d;border:1px solid #363636"></div>
<svg class="ti" style="left:633.0px;top:573.0px" width="20" height="20" viewBox="0 0 20 20"><defs><linearGradient id="zg" x1="0" y1="0" x2="0" y2="1"><stop offset="0" stop-color="#3f8cff"/><stop offset="1" stop-color="#0b5cff"/></linearGradient></defs>
<circle cx="10" cy="10" r="9.800" fill="url(#zg)"/>
<text x="10" y="13" font-family="Liberation Sans, sans-serif" font-weight="bold" font-size="9.800" text-anchor="middle" fill="#fff" letter-spacing="-.3">zm</text></svg>
<div style="left:637px;top:596px;width:12px;height:2px;border-radius:1px;background:#4cc2ff"></div>
<svg class="ti" style="left:667.5px;top:573.0px" width="20" height="20" viewBox="0 0 20 20"><path d="M.5 3.500 q0 -1.500 1.500 -1.500 h4.500 l2 2 h9 q1.500 0 1.500 1.500 v2 h-18.500z" fill="#e8a820"/>
<rect x=".5" y="5.300" width="18.700" height="12.200" rx="1.200" fill="#ffd54a"/>
<rect x=".5" y="11.500" width="18.700" height="6" rx="1.200" fill="#f5b82e"/>
<rect x="4.500" y="11.500" width="10.500" height="6" rx="1.200" fill="#1e88e5"/><rect x="4.500" y="15" width="10.500" height="2.500" fill="#1565c0"/></svg>
<svg class="ti" style="left:702.0px;top:573.0px" width="20" height="20" viewBox="0 0 20 20"><defs><linearGradient id="sg" x1="0" y1="0" x2="0" y2="1"><stop offset="0" stop-color="#ffe100"/><stop offset="1" stop-color="#f8c800"/></linearGradient></defs>
<rect x="1" y="1" width="18" height="18" rx="1.200" fill="url(#sg)"/><rect x="9.800" y="9.800" width="9.200" height="9.200" fill="#3c3c40"/><path d="M19 10.500 v7.500 q0 1 -1 1 h-7.500z" fill="#e2a600"/></svg>
<svg class="ti" style="left:736.5px;top:573.0px" width="20" height="20" viewBox="0 0 20 20"><circle cx="10" cy="10" r="9.200" fill="#fff"/>
<path d="M10 .8 a9.200 9.200 0 0 1 7.970 4.600 h-7.970 a4.600 4.600 0 0 0 -3.980 2.300 l-3.990 -2.300 a9.200 9.200 0 0 1 7.970 -4.600z" fill="#ea4335"/>
<path d="M2.030 5.400 l3.990 6.900 a4.600 4.600 0 0 0 5.300 2.100 l-2.500 4.700 a9.200 9.200 0 0 1 -6.790 -13.700z" fill="#34a853"/>
<path d="M17.970 5.400 a9.200 9.200 0 0 1 -9.150 13.700 l3.990 -6.800 a4.600 4.600 0 0 0 1.170 -6.900z" fill="#fbbc04"/>
<circle cx="10" cy="10" r="4.200" fill="#fff"/><circle cx="10" cy="10" r="3.400" fill="#4285f4"/></svg>
<svg class="ti" style="left:749px;top:571px" width="10" height="9" viewBox="0 0 10 9"><g fill="#6a3a8a" opacity=".8"><rect x="1" y="1" width="2" height="2"/><rect x="4" y="0" width="2" height="2"/><rect x="7" y="1" width="2" height="2"/><rect x="2.500" y="4" width="2" height="2"/><rect x="6" y="4.500" width="2" height="2"/></g></svg>
<svg class="ti" style="left:771.0px;top:573.0px" width="20" height="20" viewBox="0 0 20 20"><path d="M7.200 3 l.7 -2.300 h4.200 l.7 2.300z" fill="#8d98a8" transform="rotate(30 10 10)"/><path d="M7.200 3 l.7 -2.300 h4.200 l.7 2.300z" fill="#8d98a8" transform="rotate(90 10 10)"/><path d="M7.200 3 l.7 -2.300 h4.200 l.7 2.300z" fill="#8d98a8" transform="rotate(150 10 10)"/><path d="M7.200 3 l.7 -2.300 h4.200 l.7 2.300z" fill="#8d98a8" transform="rotate(210 10 10)"/><path d="M7.200 3 l.7 -2.300 h4.200 l.7 2.300z" fill="#8d98a8" transform="rotate(270 10 10)"/><path d="M7.200 3 l.7 -2.300 h4.200 l.7 2.300z" fill="#8d98a8" transform="rotate(330 10 10)"/><circle cx="10" cy="10" r="7.600" fill="#8d98a8"/><circle cx="10" cy="10" r="4.700" fill="#e4e8ec"/><circle cx="10" cy="10" r="3.400" fill="#0f62c4"/></svg>
<div style="left:710px;top:596px;width:4.600px;height:2px;border-radius:1px;background:#8c8c8c"></div>
<div style="left:744.5px;top:596px;width:4.600px;height:2px;border-radius:1px;background:#8c8c8c"></div>
<div style="left:779px;top:596px;width:4.600px;height:2px;border-radius:1px;background:#8c8c8c"></div>
<svg class="ti" style="left:848px;top:572px" width="130" height="24" viewBox="0 0 130 24">
<path d="M4.500 13.500 l4 -4 l4 4" fill="none" stroke="#f0f0f0" stroke-width="1.300"/>
<g fill="none" stroke="#e8e8e8" stroke-width="1.100"><path d="M28.200 10 a5 5 0 0 1 9.300 -1.300 M37.800 5.600 v3.300 h-3.200"/><path d="M37.800 12.800 a5 5 0 0 1 -5 3.800 M29.300 13.800 v3.200 M29.300 13.800 h3"/></g>
<circle cx="36.500" cy="15.800" r="2.700" fill="#1e7be0"/>
<g fill="none" stroke="#62bfdc" stroke-width="1.100"><rect x="52" y="5" width="3.200" height="7" rx="1.600" fill="#62bfdc"/><path d="M50.300 10.500 q0 3.600 3.300 3.600 q3.300 0 3.300 -3.600 M53.600 14.200 v2"/><path d="M67 9.500 l-7.500 3 l3.500 1 l1 3.500z"/></g>
<g fill="none" stroke="#f0f0f0" stroke-width="1.200"><path d="M76.500 10 q6.500 -5.500 13 0"/><path d="M78.700 12.500 q4.300 -3.600 8.600 0"/><path d="M80.900 14.800 q2.100 -1.800 4.200 0"/></g><circle cx="83" cy="16.300" r=".9" fill="#f0f0f0"/>
<g fill="none" stroke="#f0f0f0" stroke-width="1.100"><path d="M95.500 10 h2.200 l3 -2.800 v9.600 l-3 -2.800 h-2.200z"/><path d="M102.800 9.500 q1.600 2.500 0 5"/><path d="M104.800 8 q2.600 4 0 8" opacity=".55"/></g>
<g fill="none" stroke="#f0f0f0" stroke-width="1.100"><rect x="114.500" y="8.500" width="12" height="6.800" rx="1.500"/><path d="M127.600 10.500 v2.800"/><path d="M114 6 l2.500 2 l-2.500 2"/></g><rect x="116" y="10" width="7" height="3.800" fill="#f0f0f0"/>
</svg>
<div class="tray" style="left:960px;top:570.800px;width:77px;height:12px;line-height:12px">09:58</div>
<div class="tray" style="left:960px;top:584px;width:77px;height:12px;line-height:12px">27/10/2025</div>
<svg class="ti" style="left:1042px;top:575px" width="16" height="17" viewBox="0 0 16 17"><g fill="none" stroke="#f0f0f0" stroke-width="1.100"><path d="M3.200 12 q1.200 -1.500 1.200 -4.500 q0 -3.300 3.100 -3.300 q1.500 0 2.300 .8 M11.400 8.200 q.2 2.500 1.200 3.800z M6 13.600 q1.600 1.600 3.300 0"/></g><path d="M10.300 3.800 h2.400 l-2.400 2.800 h2.400 M13.300 1.200 h1.700 l-1.700 2 h1.700" fill="none" stroke="#f0f0f0" stroke-width=".8"/></svg>
<div style="left:1066px;top:577px;width:1px;height:12px;background:#8a8a8a"></div>
</body></html>
